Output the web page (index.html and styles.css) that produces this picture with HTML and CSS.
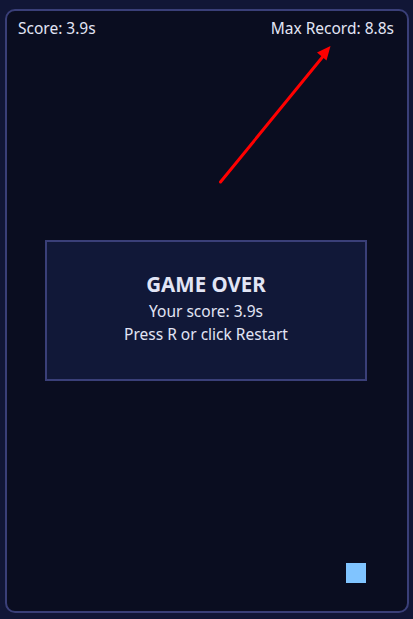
FILE: index.html
```html
<!DOCTYPE html>
<html>
<head>
<meta charset="utf-8">
<link rel="stylesheet" href="styles.css">
</head>
<body>
<div class="stage">
  <div class="game">
    <div class="hud">
      <span class="hud-item">Score: 3.9s</span>
      <span class="hud-item">Max Record: 8.8s</span>
    </div>
    <svg class="arrow" width="400" height="600" viewBox="0 0 400 600">
      <line x1="213.5" y1="171" x2="318" y2="43" stroke="#ff0000" stroke-width="3" stroke-linecap="round"/>
      <polygon points="323.5,35 319.5,49.5 310,41.5" fill="#ff0000"/>
    </svg>
    <div class="overlay">
      <div class="title">GAME OVER</div>
      <div class="line">Your score: 3.9s</div>
      <div class="line">Press R or click Restart</div>
    </div>
    <div class="player"></div>
  </div>
</div>
</body>
</html>
```
FILE: styles.css
```css
html, body {
  margin: 0;
  padding: 0;
  background: #111636;
  font-family: "Noto Sans", "Open Sans", sans-serif;
}
.stage {
  padding: 9px 0 0 5px;
}
.game {
  position: relative;
  width: 400px;
  height: 600px;
  border: 2px solid #3a3f78;
  border-radius: 10px;
  background: #0a0d20;
  overflow: hidden;
}
.hud {
  display: flex;
  justify-content: space-between;
  padding: 7px 13px 0 11px;
  color: #e2e5f5;
  font-size: 15.5px;
  line-height: 20px;
}
.arrow {
  position: absolute;
  left: 0;
  top: 0;
}
.overlay {
  position: absolute;
  left: 38px;
  top: 229px;
  width: 318px;
  height: 132px;
  padding-bottom: 5px;
  border: 2px solid #3a3f78;
  background: #111838;
  color: #e2e5f5;
  display: flex;
  flex-direction: column;
  align-items: center;
  justify-content: center;
  text-align: center;
}
.title {
  font-weight: 700;
  font-size: 20.5px;
  line-height: 26px;
  margin-bottom: 3px;
}
.line {
  font-size: 15.5px;
  line-height: 22.5px;
}
.player {
  position: absolute;
  left: 339px;
  top: 552px;
  width: 20px;
  height: 20px;
  background: #80c4ff;
}
```
